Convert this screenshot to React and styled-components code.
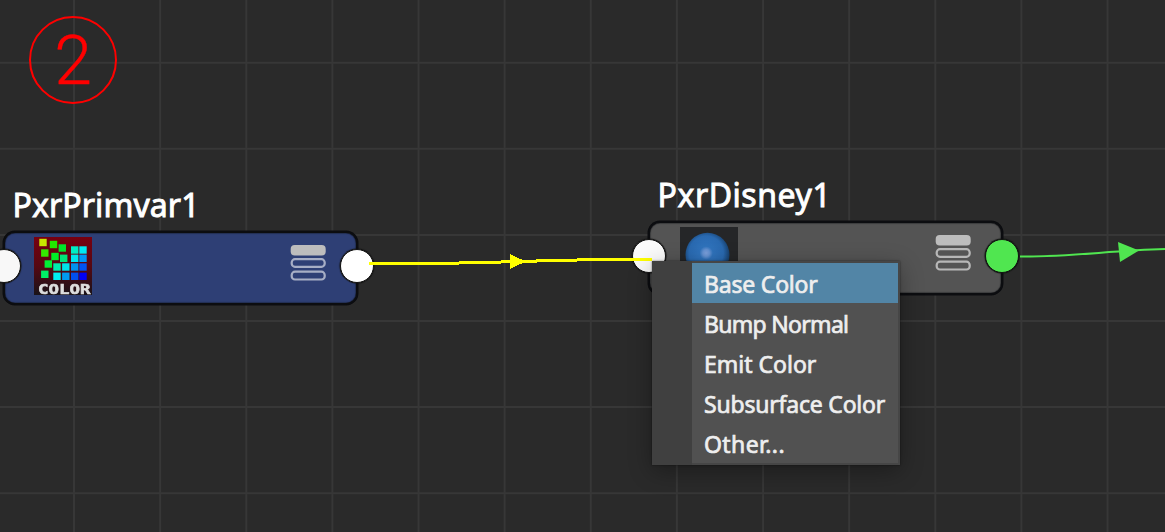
import React from "react";
import styled, { createGlobalStyle } from "styled-components";

const GlobalStyle = createGlobalStyle`
  body { margin: 0; background: #2a2a2a; overflow: hidden; }
`;

const Canvas = styled.main`
  position: relative;
  width: 1165px;
  height: 532px;
  overflow: hidden;
  background: #2a2a2a;
  font-family: "Noto Sans", "Open Sans", sans-serif;
`;

const Layer = styled.svg`
  position: absolute;
  inset: 0;
  width: 1165px;
  height: 532px;
  pointer-events: none;
`;

const StepBadge = styled.div`
  position: absolute;
  left: 29px;
  top: 16px;
  box-sizing: border-box;
  width: 88px;
  height: 88px;
  padding-top: 3px;
  border: 2px solid #ff0000;
  border-radius: 50%;
  display: flex;
  align-items: center;
  justify-content: center;
  color: #ff0000;
  font: 300 68px/81px Roboto, sans-serif;
  -webkit-text-stroke: 0.4px #ff0000;
`;

const Node = styled.section`
  position: absolute;
  left: ${(p) => p.$x}px;
  top: ${(p) => p.$y}px;
  box-sizing: border-box;
  width: 355px;
  height: 74px;
  border: 2px solid #0c0d10;
  border-radius: 12px;
  box-shadow: 0 0 0 0.5px #0c0d10, inset 0 0 1px 0.5px rgba(12, 13, 16, 0.6);
  background: ${(p) => p.$fill};
  display: flex;
  justify-content: space-between;
  padding: 4px 29px 0 ${(p) => p.$inset}px;
`;

const NodeTitle = styled.h2`
  position: absolute;
  left: ${(p) => p.$left}px;
  top: -50px;
  margin: 0;
  color: #fff;
  font-size: 32px;
  line-height: 44px;
  font-weight: 400;
  letter-spacing: ${(p) => p.$spacing}px;
  -webkit-text-stroke: 0.9px #fff;
  white-space: nowrap;
`;

const Port = styled.span`
  position: absolute;
  ${(p) => p.$side}: -18px;
  top: 16px;
  box-sizing: border-box;
  width: 34px;
  height: 34px;
  border: 1.5px solid #111;
  border-radius: 50%;
  box-shadow: 0 0 1px 0.5px #111;
  background: ${(p) => p.$color};
`;

const Thumb = styled.svg`
  width: 58px;
  height: 58px;
  overflow: visible;
`;

const Bars = styled.svg`
  width: 38px;
  height: 38px;
  margin-top: 7px;
`;

const Menu = styled.ul`
  position: absolute;
  left: 652px;
  top: 261px;
  box-sizing: border-box;
  width: 248px;
  height: 204px;
  margin: 0;
  padding: 2px 2px 2px 40px;
  list-style: none;
  background: linear-gradient(to right, #404040 40px, #464646 40px);
  box-shadow: 0 6px 22px rgba(0, 0, 0, 0.32), 0 0 2px rgba(0, 0, 0, 0.5);
`;

const MenuItem = styled.li`
  height: 40px;
  padding-left: 12px;
  background: ${(p) => (p.$active ? "#5285a6" : "#515151")};
  color: #eee;
  font-size: 23px;
  line-height: 43px;
  letter-spacing: ${(p) => p.$spacing}px;
  -webkit-text-stroke: 0.7px #eee;
  white-space: nowrap;
`;

const GRID_X = Array.from({ length: 13 }, (_, i) => 74 + i * 86.13);
const GRID_Y = Array.from({ length: 6 }, (_, i) => 62.7 + i * 86.1);

const SWATCHES = [
  [9, 5.5, "#c8e800"], [19.5, 7.5, "#22e800"], [28.3, 11, "#00e52b"],
  [10.8, 16, "#35eb00"], [21, 19.5, "#00ef28"], [29.7, 21.3, "#00e678"],
  [40.7, 13, "#00edc4"], [49, 13, "#00e9f3"],
  [40.7, 21.3, "#00e6ed"], [49, 21.3, "#0096f6"],
  [14.3, 27, "#00f035"], [23, 30, "#00edac"], [31.8, 30, "#00e3e8"],
  [40.7, 30, "#0093ed"], [49, 30, "#0052f2"],
  [10.8, 37.3, "#00ef65"], [23, 39.3, "#00eff0"], [31.8, 39.3, "#009bef"],
  [40.7, 39.3, "#0050ee"], [49, 39.3, "#0000f5"],
];

const ITEMS = [
  ["Base Color", -0.2], ["Bump Normal", -0.7], ["Emit Color", 0],
  ["Subsurface Color", -0.2], ["Other...", 0.4],
];

function AttributeBars() {
  return (
    <Bars viewBox="0 0 38 38">
      <defs>
        <filter id="barSoft"><feGaussianBlur stdDeviation="0.35" /></filter>
      </defs>
      <g filter="url(#barSoft)">
        <rect x="1.7" y="1" width="35" height="10.5" rx="4" fill="#bdbdbd" />
        <g fill="none" stroke="#fff" strokeOpacity="0.58" strokeWidth="2.2">
          <rect x="2.7" y="15.2" width="33" height="7.6" rx="3.3" />
          <rect x="2.7" y="27.7" width="33" height="7.8" rx="3.3" />
        </g>
      </g>
    </Bars>
  );
}

function ColorThumb() {
  return (
    <Thumb viewBox="0 0 58 58">
      <defs>
        <linearGradient id="swatchBack" x2="0" y2="1">
          <stop offset="0" stopColor="#780010" />
          <stop offset="0.5" stopColor="#560812" />
          <stop offset="1" stopColor="#191319" />
        </linearGradient>
        <filter id="swatchSoft"><feGaussianBlur stdDeviation="0.7" /></filter>
      </defs>
      <rect width="58" height="58" fill="url(#swatchBack)" />
      <g filter="url(#swatchSoft)">
        {SWATCHES.map(([x, y, c]) => (
          <rect key={`${x}-${y}`} x={x - 3.7} y={y - 3.7} width="7.4" height="7.4" fill={c} />
        ))}
        <text x="4" y="57" textLength="52.5" lengthAdjust="spacingAndGlyphs" fill="#dedede"
          stroke="#dedede" strokeWidth="0.6"
          fontFamily="DejaVu Sans Mono, monospace" fontWeight="700" fontSize="14.5">COLOR</text>
      </g>
    </Thumb>
  );
}

function SphereThumb() {
  return (
    <Thumb viewBox="0 0 58 58">
      <defs>
        <radialGradient id="sphere" cx="0.47" cy="0.46" r="0.54">
          <stop offset="0" stopColor="#7b9fda" />
          <stop offset="0.14" stopColor="#6592d2" />
          <stop offset="0.28" stopColor="#2f72bb" />
          <stop offset="0.72" stopColor="#2969b0" />
          <stop offset="1" stopColor="#163d68" />
        </radialGradient>
      </defs>
      <rect width="58" height="58" fill="#252628" />
      <circle cx="27.5" cy="27.8" r="22" fill="url(#sphere)" />
    </Thumb>
  );
}

export default function App() {
  return (
    <>
      <GlobalStyle />
      <Canvas>
        <Layer viewBox="0 0 1165 532">
          <g stroke="#373737" strokeWidth="2">
            {GRID_X.map((x) => <path key={x} d={`M${x} 0V532`} />)}
            {GRID_Y.map((y) => <path key={y} d={`M0 ${y}H1165`} />)}
          </g>
        </Layer>
        <StepBadge>2</StepBadge>
        <Node $x={3} $y={231} $inset={29} $fill="#2e3f75">
          <NodeTitle $left={7.5} $spacing={0.1}>PxrPrimvar1</NodeTitle>
          <ColorThumb />
          <AttributeBars />
          <Port $side="left" $color="#f8f8f8" />
          <Port $side="right" $color="#fff" />
        </Node>
        <Node $x={648} $y={221} $inset={30} $fill="#545454">
          <NodeTitle $left={7.5} $spacing={0.55}>PxrDisney1</NodeTitle>
          <SphereThumb />
          <AttributeBars />
          <Port $side="left" $color="#fafafa" />
          <Port $side="right" $color="#50e650" />
        </Node>
        <Layer viewBox="0 0 1165 532">
          <path d="M369 263.5H420C480 263.5 560 259.5 615 259.5H652" fill="none" stroke="#ff0" strokeWidth="3" shapeRendering="crispEdges" />
          <path d="M509.5 254V269L526 261.5Z" fill="#ff0" shapeRendering="crispEdges" />
          <path d="M1020 256.5C1070 257 1110 250.5 1165 249" fill="none" stroke="#50e650" strokeWidth="2" />
          <path d="M1118 242L1120 262L1139 250.5Z" fill="#50e650" />
        </Layer>
        <Menu>
          {ITEMS.map(([label, spacing], i) => (
            <MenuItem key={label} $active={i === 0} $spacing={spacing}>{label}</MenuItem>
          ))}
        </Menu>
      </Canvas>
    </>
  );
}
